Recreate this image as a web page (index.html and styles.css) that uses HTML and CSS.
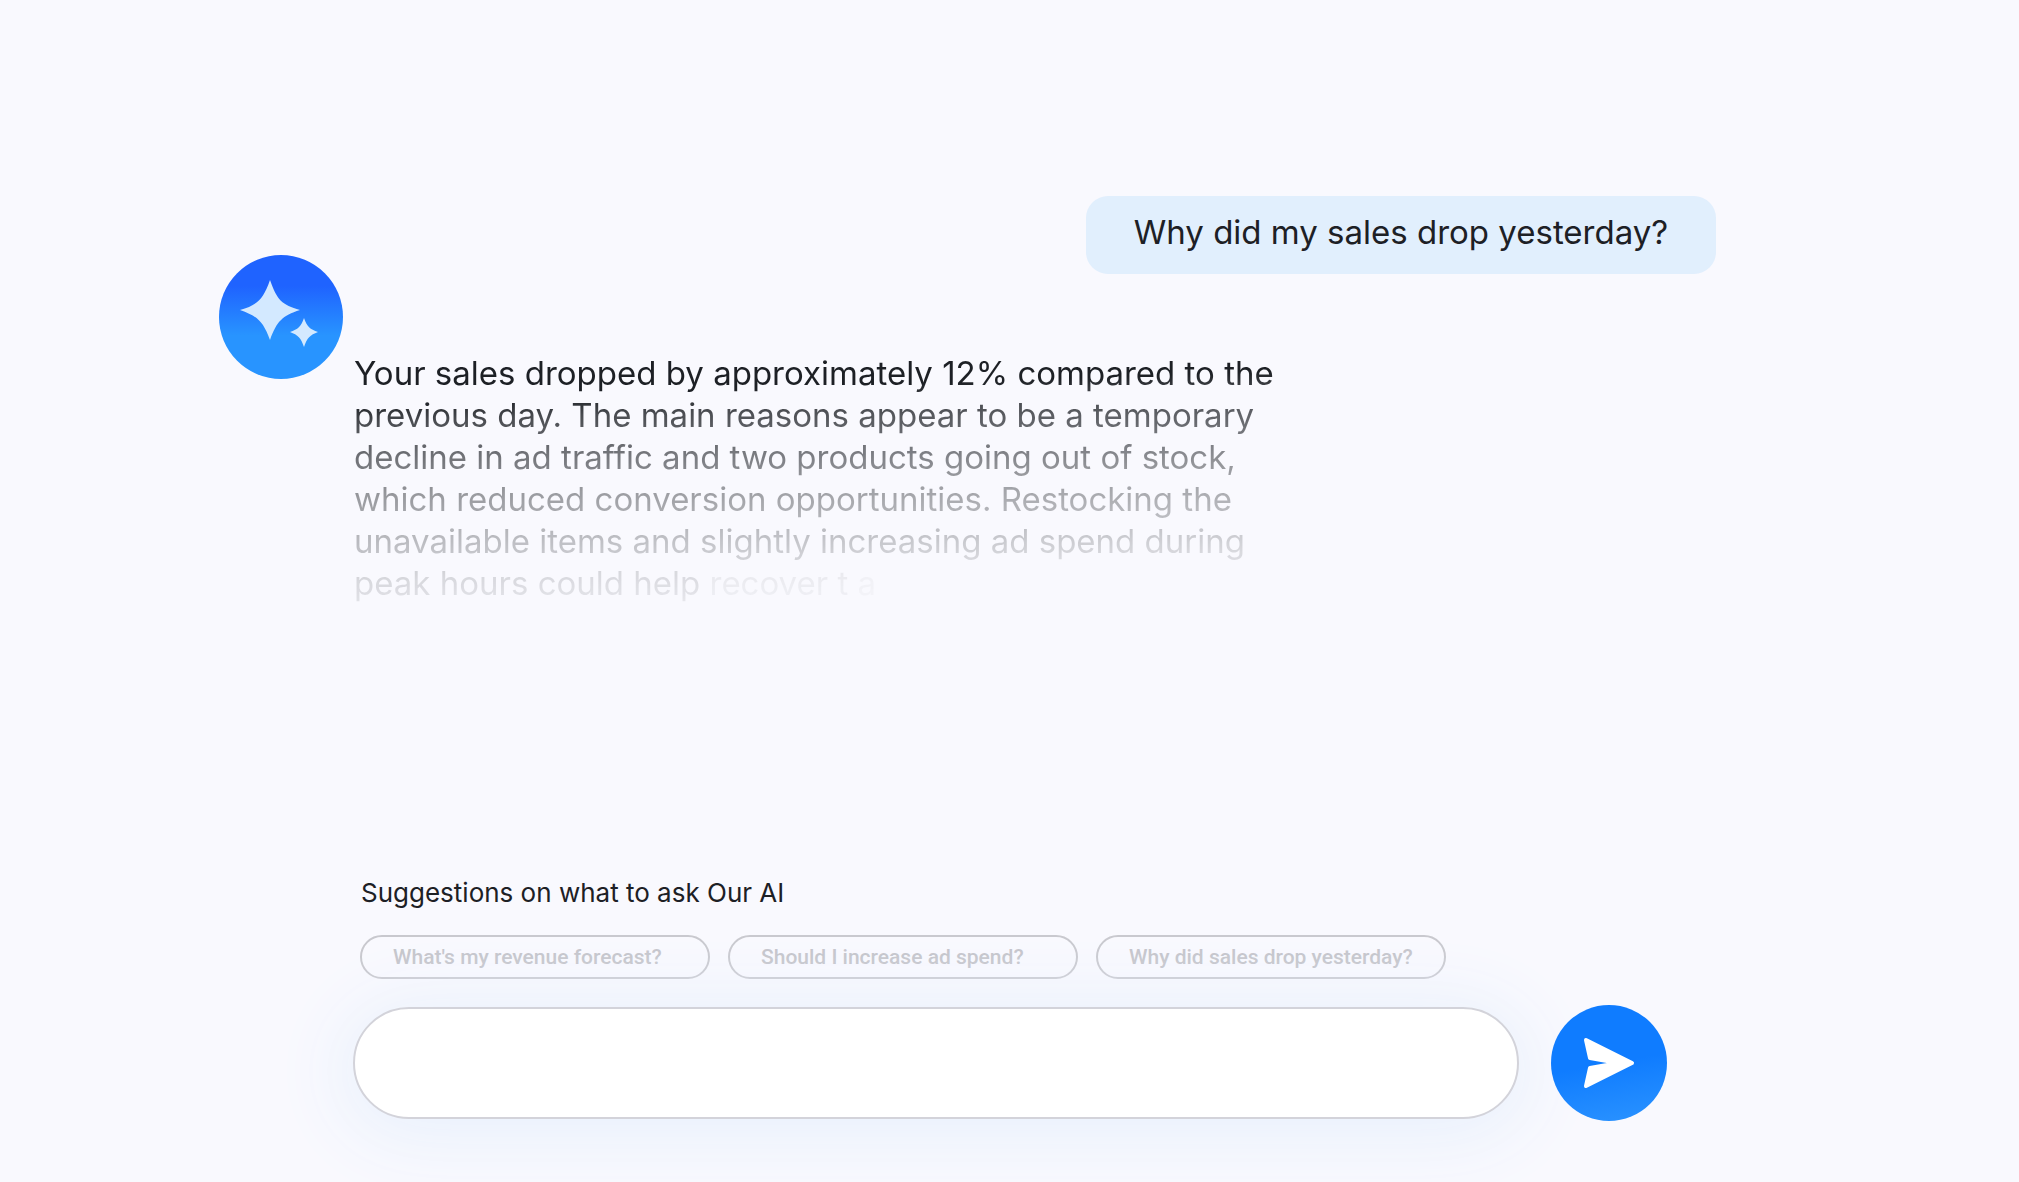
FILE: index.html
```html
<!DOCTYPE html>
<html lang="en"><head>
<meta charset="utf-8">
<title>Our AI</title>
<meta name="viewport" content="width=device-width, initial-scale=1">
<link rel="stylesheet" href="styles.css">
</head><body>
<main class="chat">
<div class="question">Why did my sales drop yesterday?</div>
<div class="answer">
<svg class="avatar" viewBox="0 0 124 124" aria-hidden="true">
<defs>
<linearGradient id="sky" x1="0" y1="0" x2="0" y2="1">
<stop offset="0.25" stop-color="#1f63ff"/>
<stop offset="0.65" stop-color="#2894ff"/>
</linearGradient>
</defs>
<circle cx="62" cy="62" r="62" fill="url(#sky)"/>
<path fill="#d3e9ff" d="M51 25C58 45 63 50 81 55C63 61 58 66 51 85C44 66 38 61 21 55C38 50 44 45 51 25Z"/>
<path fill="#d3e9ff" d="M85 63C88 72 91 74 99 77C91 80 88 83 85 92C82 83 79 80 71 77C79 74 82 72 85 63Z"/>
</svg>
<p class="answer-text">Your sales dropped by approximately 12% compared to the<br>
previous day. The main reasons appear to be a temporary<br>
decline in ad traffic and two products going out of stock,<br>
which reduced conversion opportunities. Restocking the<br>
unavailable items and slightly increasing ad spend during<br>
peak hours could help <span class="typing">recover t</span> <span class="typing-last">a</span></p>
</div>
<form class="ask">
<h2>Suggestions on what to ask Our AI</h2>
<div class="suggestions">
<button type="button" class="chip">What's my revenue forecast?</button>
<button type="button" class="chip">Should I increase ad spend?</button>
<button type="button" class="chip">Why did sales drop yesterday?</button>
</div>
<div class="composer">
<input type="text" name="message" aria-label="Ask Our AI">
<button type="submit" class="send" aria-label="Send">
<svg viewBox="0 0 52 52" aria-hidden="true">
<path fill="#fff" stroke="#fff" stroke-width="4" stroke-linejoin="round" d="M3 3L49 26L3 49L7 31L24 28C27 27 27 25 24 24L7 21Z"/>
</svg>
</button>
</div>
</form>
</main>
</body></html>
```
FILE: styles.css
```css
* { box-sizing: border-box; }
body { margin: 0; background: #f9f9fe; color: #1d2025; font-family: Inter, "Liberation Sans", sans-serif; }
.chat { display: flex; flex-direction: column; min-height: 100vh; padding: 196px 15% 61px 219px; overflow: hidden; }
.question { align-self: flex-end; padding: 15px 48px 21px; border-radius: 22px; background: #e1effd; font-size: 33px; line-height: 42px; }
.answer { display: flex; align-items: flex-start; gap: 11px; margin-top: -19px; }
.avatar { flex: none; width: 124px; height: 124px; }
.answer-text { margin: 97px 0 0; font-size: 33px; line-height: 42px; white-space: nowrap; -webkit-mask-image: linear-gradient(178deg, #000 18%, rgba(0,0,0,0.8) 25%, rgba(0,0,0,0.43) 52%, rgba(0,0,0,0.15) 81%, rgba(0,0,0,0.06) 96%); mask-image: linear-gradient(178deg, #000 18%, rgba(0,0,0,0.8) 25%, rgba(0,0,0,0.43) 52%, rgba(0,0,0,0.15) 81%, rgba(0,0,0,0.06) 96%); }
.typing { opacity: 0.5; }
.typing-last { opacity: 0.3; }
.ask { margin-top: auto; padding: 0 49px 0 134px; }
h2 { margin: 0 8px 24px; font-size: 26px; font-weight: 400; line-height: 36px; }
.suggestions { display: flex; gap: 18px; margin: 0 7px 26px; }
.chip { width: 350px; height: 44px; padding: 0 31px; border: 2px solid #c8c8ce; border-radius: 22px; background: transparent; color: #c4c4ca; font: 500 21px Roboto, sans-serif; text-align: left; white-space: nowrap; cursor: pointer; }
.composer { display: flex; align-items: center; gap: 32px; }
.composer input { flex: 1; min-width: 0; height: 112px; padding: 0 48px; border: 2px solid #d3d3da; border-radius: 56px; outline: none; background: #fff; color: inherit; font: 26px Inter, sans-serif; box-shadow: 0 8px 76px 10px #e8f0fc; }
.send { display: flex; align-items: center; justify-content: center; flex: none; width: 116px; height: 116px; padding: 0; border: none; border-radius: 50%; background: linear-gradient(170deg, #0f7cff 50%, #2b93ff); cursor: pointer; }
.send svg { width: 52px; height: 52px; }
```
